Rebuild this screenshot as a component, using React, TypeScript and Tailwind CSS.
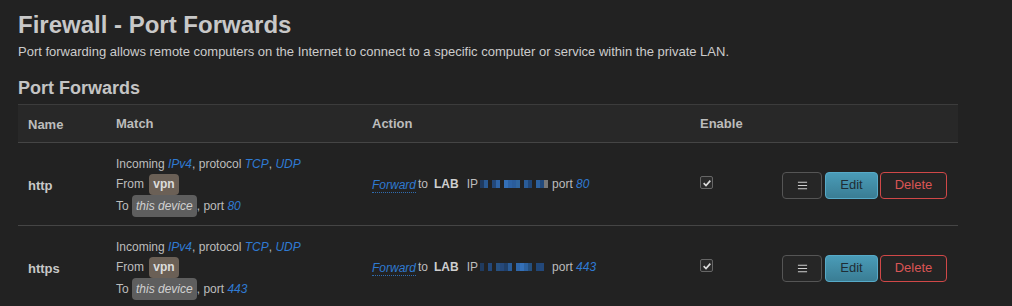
import React from 'react';

interface Rule {
  name: string;
  port: string;
  ipBlocks: string[];
}

const rules: Rule[] = [
  {
    name: 'http',
    port: '80',
    ipBlocks: ['#1f3a5f', '#2a5a94', 'transparent', '#23487a', '#2f64a6', 'transparent', '#3470b8', '#2c62a4', '#2a5d9c', '#30669f', 'transparent', '#2a5c98', '#204677', 'transparent', '#2d62a0', '#224a7c', '#777777'],
  },
  {
    name: 'https',
    port: '443',
    ipBlocks: ['#203b5f', 'transparent', '#23487a', 'transparent', '#27507f', '#25487a', '#203f68', '#2a5c98', 'transparent', '#2f66a8', '#3470b8', '#2d62a0', '#25507f', 'transparent', '#204677', '#23487a', 'transparent'],
  },
];

const Link: React.FC<{ children: React.ReactNode }> = ({ children }) => (
  <span className="italic text-[#2f7ad2]">{children}</span>
);

const MatchCell: React.FC<{ port: string }> = ({ port }) => (
  <div className="flex flex-col text-[12px] text-[#bdbdbd]">
    <div className="h-[19px] flex items-center">
      Incoming&nbsp;<Link>IPv4</Link>, protocol&nbsp;<Link>TCP</Link>,&nbsp;<Link>UDP</Link>
    </div>
    <div className="h-[22px] flex items-center">
      From&nbsp;
      <span className="ml-[2px] inline-flex items-center h-[21px] px-[4px] rounded-[4px] bg-[#6b6056] font-bold text-[#dcdcdc]">vpn</span>
    </div>
    <div className="h-[22px] flex items-center">
      To&nbsp;
      <span className="inline-flex items-center h-[22px] px-[4px] rounded-[4px] bg-[#5e5e5e] italic text-[#d0d0d0]">this device</span>
      , port&nbsp;<Link>{port}</Link>
    </div>
  </div>
);

const RedactedIp: React.FC<{ blocks: string[] }> = ({ blocks }) => (
  <span className="inline-flex items-center h-[8px] ml-[2px] mr-[4px]">
    {blocks.map((c, i) => (
      <span key={i} className="inline-block w-[4px] h-[8px]" style={{ backgroundColor: c }} />
    ))}
  </span>
);

const App: React.FC = () => {
  return (
    <div className="w-[1012px] h-[306px] overflow-hidden bg-[#222222] font-['Liberation_Sans',Arial,sans-serif] text-[#cccccc]">
      <div className="px-[18px] pt-[10px]">
        <h2 className="text-[24px] leading-[30px] font-bold text-[#c8c8c8]">Firewall - Port Forwards</h2>
        <p className="mt-[3px] text-[13px] leading-[18px] text-[#cccccc]">
          Port forwarding allows remote computers on the Internet to connect to a specific computer or service within the private LAN.
        </p>
        <h3 className="mt-[16px] text-[18px] leading-[22px] font-bold text-[#c4c4c4]">Port Forwards</h3>

        <table className="mt-[5px] w-[940px] table-fixed border-collapse">
          <colgroup>
            <col className="w-[88px]" />
            <col className="w-[256px]" />
            <col className="w-[328px]" />
            <col className="w-[82px]" />
            <col className="w-[186px]" />
          </colgroup>
          <thead>
            <tr className="h-[38px] bg-[#282828] border-t border-t-[#3c3c3c] border-b border-b-[#454545]">
              <th className="pl-[10px] text-left text-[13px] font-bold text-[#bcbcbc] align-middle pt-[2px]">Name</th>
              <th className="pl-[10px] text-left text-[13px] font-bold text-[#bcbcbc] align-middle">Match</th>
              <th className="pl-[10px] text-left text-[13px] font-bold text-[#bcbcbc] align-middle">Action</th>
              <th className="pl-[10px] text-left text-[13px] font-bold text-[#bcbcbc] align-middle">Enable</th>
              <th />
            </tr>
          </thead>
          <tbody>
            {rules.map((r) => (
              <tr key={r.name} className="border-b border-b-[#454545]">
                <td className="pl-[10px] align-middle text-[13px] font-bold text-[#c8c8c8] pt-[3px]">{r.name}</td>
                <td className="pl-[10px] pt-[11px] pb-[8px] align-middle">
                  <MatchCell port={r.port} />
                </td>
                <td className="pl-[10px] align-middle">
                  <div className="flex items-center text-[12px] text-[#bdbdbd] whitespace-nowrap">
                    <span className="italic text-[#2f7ad2] border-b border-dotted border-b-[#2f6cb0] leading-[14px] mt-[2px]">Forward</span>
                    <span className="ml-[2px]">to</span>
                    <span className="ml-[6px] font-bold text-[#cfcfcf]">LAB</span>
                    <span className="ml-[8px]">IP</span>
                    <RedactedIp blocks={r.ipBlocks} />
                    <span>port&nbsp;</span>
                    <Link>{r.port}</Link>
                  </div>
                </td>
                <td className="pl-[10px] align-middle">
                  <div className="w-[13px] h-[13px] rounded-[2px] border border-[#666666] bg-[#2a2a2a] flex items-center justify-center -mt-[3px]">
                    <svg viewBox="0 0 12 12" className="w-[10px] h-[10px]">
                      <path d="M2 6.2 L4.8 9 L10 3.2" fill="none" stroke="#dddddd" strokeWidth="2" />
                    </svg>
                  </div>
                </td>
                <td className="pr-[11px] align-middle">
                  <div className="flex justify-end pt-[2px]">
                    <button className="w-[40px] h-[27px] rounded-[4px] border border-[#555555] bg-[#262626] flex items-center justify-center">
                      <svg viewBox="0 0 12 12" className="w-[11px] h-[11px]">
                        <path d="M1 2.5 H11 M1 6 H11 M1 9.5 H11" stroke="#d0d0d0" strokeWidth="1.2" />
                      </svg>
                    </button>
                    <button className="ml-[3px] w-[53px] h-[27px] rounded-[4px] border border-[#57aac8] bg-gradient-to-b from-[#4a9cb8] to-[#3a7d94] text-[13px] text-[#1f2d35]">
                      Edit
                    </button>
                    <button className="ml-[2px] w-[67px] h-[27px] rounded-[4px] border border-[#d04848] bg-[#242424] text-[13px] text-[#da5555]">
                      Delete
                    </button>
                  </div>
                </td>
              </tr>
            ))}
          </tbody>
        </table>
      </div>
    </div>
  );
};

export default App;
